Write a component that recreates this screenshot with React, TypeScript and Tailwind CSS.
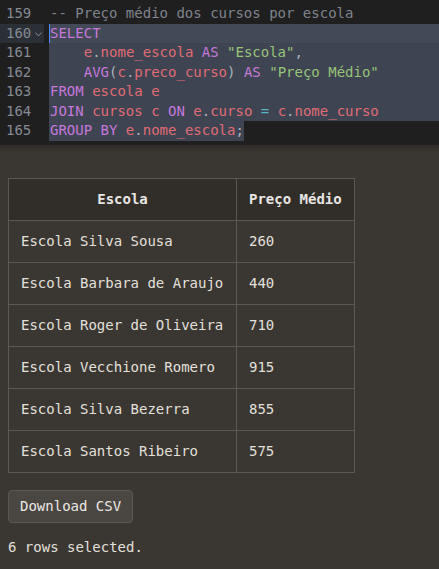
import type { ReactNode } from "react";

const mono = "font-['DejaVu_Sans_Mono',monospace]";

const kw = "text-[#c678dd]";
const id = "text-[#e06c75]";
const str = "text-[#98c379]";
const pun = "text-[#abb2bf]";
const op = "text-[#56b6c2]";

type Line = { n: number; code: ReactNode; sel?: "full" | "part"; active?: boolean };

const lines: Line[] = [
  { n: 159, code: <span className="text-[#7f848e]">-- Preço médio dos cursos por escola</span> },
  { n: 160, code: <span className={kw}>SELECT</span>, sel: "full", active: true },
  {
    n: 161,
    sel: "full",
    code: (
      <>
        <span className={id}>{"    e"}</span>
        <span className={pun}>.</span>
        <span className={id}>nome_escola </span>
        <span className={kw}>AS </span>
        <span className={str}>"Escola"</span>
        <span className={pun}>,</span>
      </>
    ),
  },
  {
    n: 162,
    sel: "full",
    code: (
      <>
        <span className={kw}>{"    AVG"}</span>
        <span className={pun}>(</span>
        <span className={id}>c</span>
        <span className={pun}>.</span>
        <span className={id}>preco_curso</span>
        <span className={pun}>) </span>
        <span className={kw}>AS </span>
        <span className={str}>"Preço Médio"</span>
      </>
    ),
  },
  {
    n: 163,
    sel: "full",
    code: (
      <>
        <span className={kw}>FROM </span>
        <span className={id}>escola e</span>
      </>
    ),
  },
  {
    n: 164,
    sel: "full",
    code: (
      <>
        <span className={kw}>JOIN </span>
        <span className={id}>cursos c </span>
        <span className={kw}>ON </span>
        <span className={id}>e</span>
        <span className={pun}>.</span>
        <span className={id}>curso </span>
        <span className={op}>= </span>
        <span className={id}>c</span>
        <span className={pun}>.</span>
        <span className={id}>nome_curso</span>
      </>
    ),
  },
  {
    n: 165,
    sel: "part",
    code: (
      <>
        <span className={kw}>GROUP BY </span>
        <span className={id}>e</span>
        <span className={pun}>.</span>
        <span className={id}>nome_escola</span>
        <span className={pun}>;</span>
      </>
    ),
  },
];

const rows: [string, number][] = [
  ["Escola Silva Sousa", 260],
  ["Escola Barbara de Araujo", 440],
  ["Escola Roger de Oliveira", 710],
  ["Escola Vecchione Romero", 915],
  ["Escola Silva Bezerra", 855],
  ["Escola Santos Ribeiro", 575],
];

const Editor = () => (
  <div className={`h-[145px] bg-[#1f1f1f] pt-[4px] text-[14px] ${mono}`}>
    {lines.map((l) => (
      <div key={l.n} className="flex h-[19.5px] items-center leading-[19.5px]">
        <div
          className={`relative flex h-full w-[44px] shrink-0 items-center pl-[6px] text-[#858b94] ${
            l.active ? "bg-[#2b2f36]" : ""
          }`}
        >
          {l.n}
          {l.active && (
            <svg className="absolute left-[35px] top-[8px]" width="7" height="5" viewBox="0 0 7 5">
              <path d="M0.5 0.5 L3.5 4 L6.5 0.5" stroke="#858b94" strokeWidth="1" fill="none" />
            </svg>
          )}
        </div>
        <div className="w-[5px] shrink-0" />
        <div
          className={`relative flex h-full items-center whitespace-pre pl-[1px] ${
            l.sel === "full" ? "flex-1" : ""
          } ${l.active ? "bg-[#434a57]" : l.sel ? "bg-[#3e4451]" : ""}`}
        >
          {l.active && <div className="absolute left-0 top-0 h-full w-[1px] bg-[#528bff]" />}
          {l.code}
        </div>
      </div>
    ))}
  </div>
);

const App = () => {
  return (
    <div className="min-h-[569px] bg-[#3a3632] text-[#e3e0db]">
      <Editor />
      <div className="h-[8px] bg-gradient-to-b from-[#2f2c29] to-[#3a3632]" />
      <div className={`px-[8px] pt-[25px] text-[14px] ${mono}`}>
        <table className="border-collapse border border-[#5b5752]">
          <thead>
            <tr className="h-[42px] bg-[#312d29]">
              <th className="w-[228px] border border-[#5b5752] px-[12px] text-center font-bold text-[#e8e6e3]">
                Escola
              </th>
              <th className="w-[118px] border border-[#5b5752] px-[12px] text-left font-bold text-[#e8e6e3]">
                Preço Médio
              </th>
            </tr>
          </thead>
          <tbody>
            {rows.map(([name, price]) => (
              <tr key={name} className="h-[42px]">
                <td className="border border-[#5b5752] px-[12px] whitespace-pre">{name}</td>
                <td className="border border-[#5b5752] px-[12px]">{price}</td>
              </tr>
            ))}
          </tbody>
        </table>
        <button className="mt-[17px] h-[33px] rounded-[4px] border border-[#5b5752] bg-[#4a4642] px-[11px] text-[#ebe8e4]">
          Download CSV
        </button>
        <p className="mt-[15px] leading-[18px]">6 rows selected.</p>
      </div>
    </div>
  );
};

export default App;
